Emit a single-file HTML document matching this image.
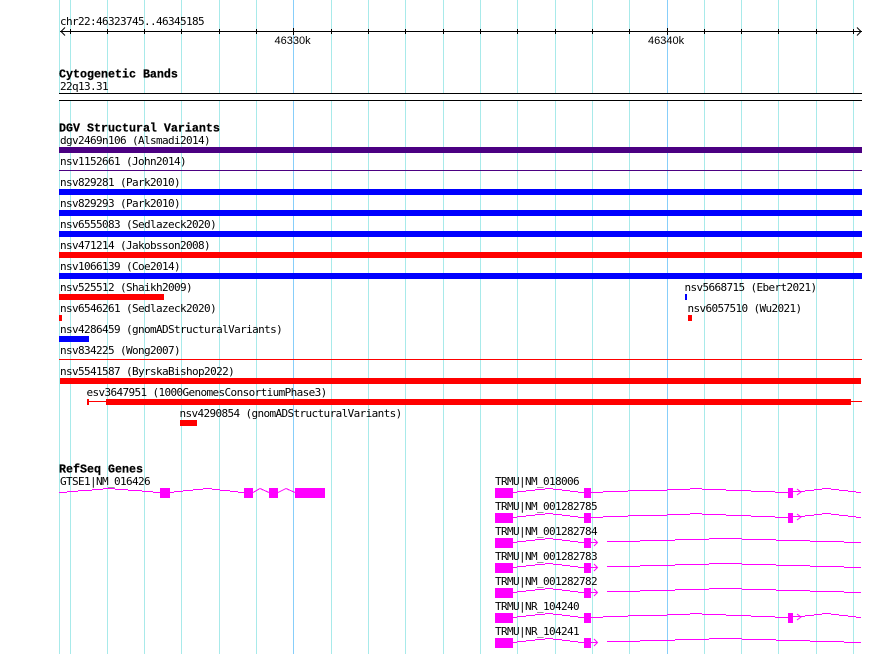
<!DOCTYPE html>
<html><head><meta charset="utf-8"><style>
html,body{margin:0;padding:0;background:#fff;width:890px;height:654px;overflow:hidden}
svg{display:block}
text{font-family:"DejaVu Sans Mono","Liberation Mono",monospace;font-size:11px;fill:#000;letter-spacing:-.62px}
.b{font-family:"Liberation Mono",monospace;font-size:11.67px;font-weight:bold;letter-spacing:0;stroke:#000;stroke-width:.25px}
.s{font-family:"Liberation Sans",sans-serif;font-size:11px;letter-spacing:0}
.g{stroke:#a8eaea;stroke-width:1}
.bl{stroke:#87cefa;stroke-width:1}
.x{shape-rendering:crispEdges}
.m{fill:none;stroke:#f0f;stroke-width:1;shape-rendering:crispEdges}
.a{fill:none;stroke:#f0f;stroke-width:1}
</style></head><body>
<svg width="890" height="654" viewBox="0 0 890 654" xmlns="http://www.w3.org/2000/svg">
<g class="x">
<path class="g" d="M59.5 0V654M70.5 0V654M107.5 0V654M144.5 0V654M181.5 0V654M219.5 0V654M256.5 0V654M331.5 0V654M368.5 0V654M405.5 0V654M443.5 0V654M480.5 0V654M517.5 0V654M555.5 0V654M592.5 0V654M629.5 0V654M704.5 0V654M741.5 0V654M778.5 0V654M816.5 0V654M853.5 0V654"/>
<path class="bl" d="M293.5 0V654M667.5 0V654"/>
<rect x="59" y="93" width="803" height="8" fill="#fff"/>
<path stroke="#000" d="M60 31.5H862M59 93.5H862M59 100.5H862"/>
<path stroke="#000" d="M70.5 29V34M107.5 29V34M144.5 29V34M181.5 29V34M219.5 29V34M256.5 29V34M293.5 28V35M331.5 29V34M368.5 29V34M405.5 29V34M443.5 29V34M480.5 29V34M517.5 29V34M555.5 29V34M592.5 29V34M629.5 29V34M667.5 28V35M704.5 29V34M741.5 29V34M778.5 29V34M816.5 29V34M853.5 29V34"/>
</g>
<path fill="none" stroke="#000" stroke-width="1" d="M65 27.500L61 31.500L65 35.500M857 27.500L861 31.500L857 35.500"/>

<text x="60" y="25">chr22:46323745..46345185</text>
<text class="s" x="274.500" y="44">46330k</text>
<text class="s" x="648" y="44">46340k</text>
<text class="b" x="59" y="77.500">Cytogenetic Bands</text>
<text x="60" y="90">22q13.31</text>
<text class="b" x="59" y="131.500">DGV Structural Variants</text>

<g class="x">
<rect x="59" y="147" width="803" height="6" fill="#4b0082"/>
<rect x="59" y="170" width="803" height="1" fill="#4b0082"/>
<rect x="59" y="189" width="803" height="6" fill="#00f"/>
<rect x="59" y="210" width="803" height="6" fill="#00f"/>
<rect x="59" y="231" width="803" height="6" fill="#00f"/>
<rect x="59" y="252" width="803" height="6" fill="#f00"/>
<rect x="59" y="273" width="803" height="6" fill="#00f"/>
<rect x="59" y="294" width="105" height="6" fill="#f00"/>
<rect x="685" y="294" width="2" height="6" fill="#00f"/>
<rect x="59" y="315" width="3" height="6" fill="#f00"/>
<rect x="688" y="315" width="4" height="6" fill="#f00"/>
<rect x="59" y="336" width="30" height="6" fill="#00f"/>
<rect x="59" y="359" width="803" height="1" fill="#f00"/>
<rect x="60" y="378" width="801" height="6" fill="#f00"/>
<rect x="87" y="399" width="2" height="6" fill="#f00"/>
<rect x="89" y="401" width="773" height="1" fill="#f00"/>
<rect x="106" y="399" width="745" height="6" fill="#f00"/>
<rect x="180" y="420" width="17" height="6" fill="#f00"/>
</g>

<text x="60" y="144">dgv2469n106 (Alsmadi2014)</text>
<text x="60" y="165">nsv1152661 (John2014)</text>
<text x="60" y="186">nsv829281 (Park2010)</text>
<text x="60" y="207">nsv829293 (Park2010)</text>
<text x="60" y="228">nsv6555083 (Sedlazeck2020)</text>
<text x="60" y="249">nsv471214 (Jakobsson2008)</text>
<text x="60" y="270">nsv1066139 (Coe2014)</text>
<text x="60" y="291">nsv525512 (Shaikh2009)</text>
<text x="684.500" y="291">nsv5668715 (Ebert2021)</text>
<text x="60" y="312">nsv6546261 (Sedlazeck2020)</text>
<text x="687.500" y="312">nsv6057510 (Wu2021)</text>
<text x="60" y="333">nsv4286459 (gnomADStructuralVariants)</text>
<text x="60" y="354">nsv834225 (Wong2007)</text>
<text x="60" y="375">nsv5541587 (ByrskaBishop2022)</text>
<text x="86.500" y="396">esv3647951 (1000GenomesConsortiumPhase3)</text>
<text x="179.500" y="417">nsv4290854 (gnomADStructuralVariants)</text>

<text class="b" x="59" y="472.500">RefSeq Genes</text>
<text x="60" y="485">GTSE1|NM_016426</text>
<text x="495" y="485">TRMU|NM_018006</text>
<text x="495" y="510">TRMU|NM_001282785</text>
<text x="495" y="535">TRMU|NM_001282784</text>
<text x="495" y="560">TRMU|NM_001282783</text>
<text x="495" y="585">TRMU|NM_001282782</text>
<text x="495" y="610">TRMU|NR_104240</text>
<text x="495" y="635">TRMU|NR_104241</text>

<g class="x" fill="#f0f">
<rect x="160" y="488" width="10" height="10"/>
<rect x="244" y="488" width="9" height="10"/>
<rect x="269" y="488" width="9" height="10"/>
<rect x="295" y="488" width="30" height="10"/>
</g>
<path class="m" d="M59 492.500H67M67 491.500H78M78 490.500H92M92 489.500H103M103 488.500H115M115 489.500H128M128 490.500H142M142 491.500H153M153 492.500H160M170 492.500H174M174 491.500H183M183 490.500H193M193 489.500H203M203 488.500H212M212 489.500H220M220 490.500H230M230 491.500H238M238 492.500H244"/>
<path class="m" d="M253 492.500L260 488.500L269 492.500M278 492.500L286 488.500L295 492.500"/>

<defs>
<g id="a">
<rect class="x" fill="#f0f" x="495" y="488" width="18" height="10"/>
<rect class="x" fill="#f0f" x="584" y="488" width="7" height="10"/>
<rect class="x" fill="#f0f" x="788" y="488" width="5" height="10"/>
<path class="m" d="M513 492.500H517M517 491.500H526M526 490.500H535M535 489.500H545M545 488.500H553M553 489.500H562M562 490.500H570M570 491.500H578M578 492.500H584M591 492.500H603M603 491.500H628M628 490.500H667M667 489.500H690M690 488.500H702M702 489.500H726M726 490.500H751M751 491.500H775M775 492.500H788M793 491.500H805M805 490.500H814M814 489.500H822M822 488.500H831M831 489.500H839M839 490.500H848M848 491.500H856M856 492.500H861"/>
<path class="a" d="M797 489L801 492L797 495"/>
</g>
<g id="b">
<rect class="x" fill="#f0f" x="495" y="538" width="18" height="10"/>
<rect class="x" fill="#f0f" x="584" y="538" width="7" height="10"/>
<path class="m" d="M513 542.500H517M517 541.500H526M526 540.500H535M535 539.500H545M545 538.500H553M553 539.500H562M562 540.500H570M570 541.500H578M578 542.500H584M591 542.500H597M607 541.500H640M640 540.500H675M675 539.500H709M709 538.500H742M742 539.500H776M776 540.500H810M810 541.500H844M844 542.500H861"/>
<path class="a" d="M594 539L597.500 542.500L594 546"/>
</g>
</defs>
<use href="#a"/>
<use href="#a" y="25"/>
<use href="#b"/>
<use href="#b" y="25"/>
<use href="#b" y="50"/>
<use href="#a" y="125"/>
<use href="#b" y="100"/>
</svg>
</body></html>
